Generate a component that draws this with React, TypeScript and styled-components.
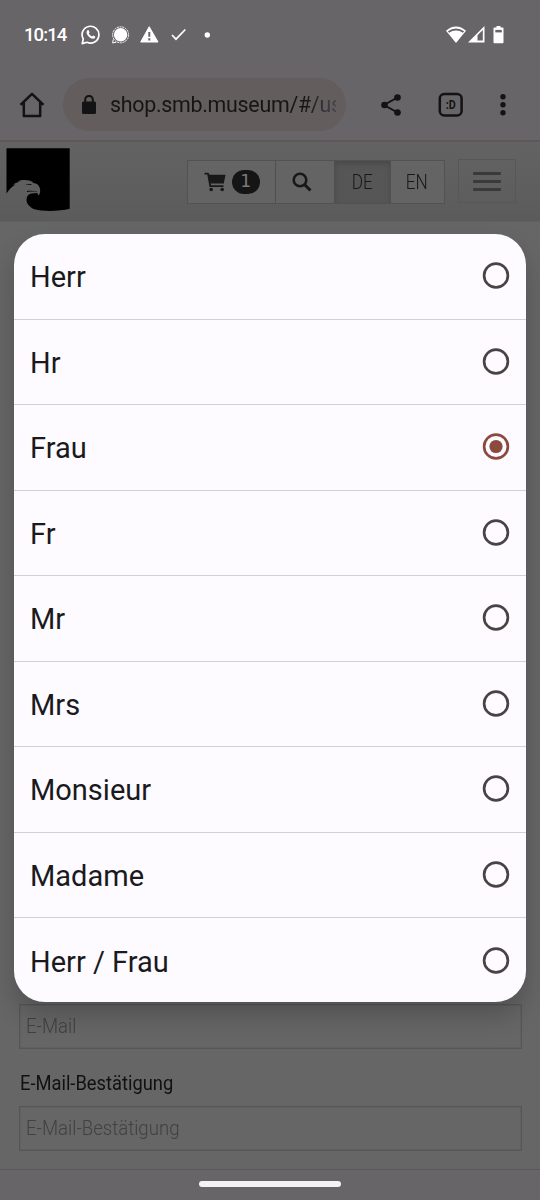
import React from "react";
import styled, { createGlobalStyle } from "styled-components";

const Global = createGlobalStyle`
  * { box-sizing: border-box; }
  body { margin: 0; background: #666; font-family: Roboto, sans-serif; }
`;

const Screen = styled.div`
  position: relative;
  display: flex;
  flex-direction: column;
  width: 540px;
  height: 1200px;
  overflow: hidden;
  background: #666666;
`;

const StatusBar = styled.header`
  display: flex;
  align-items: center;
  height: 69px;
  padding: 0 36px 0 24px;
  background: #676568;
  color: #fff;
`;

const Clock = styled.time`
  width: 57px;
  font-size: 18.6px;
  font-weight: 500;
  letter-spacing: -0.95px;
`;

const StatusIcons = styled.div<{ $gap: number; $end?: boolean }>`
  display: flex;
  align-items: center;
  gap: ${(p) => p.$gap}px;
  margin-left: ${(p) => (p.$end ? "auto" : "0")};
  svg { display: block; }
`;

const BrowserBar = styled.div`
  display: flex;
  align-items: center;
  height: 73px;
  padding: 0 20px 0 18px;
  background: #676568;
  border-bottom: 2px solid #5f5858;
  color: #131214;
  svg { display: block; flex: none; }
`;

const AddressField = styled.div`
  display: flex;
  align-items: center;
  width: 283px;
  height: 53px;
  margin: 0 33px 0 17px;
  padding-left: 18px;
  border-radius: 27px;
  background: #635d5d;
`;

const Address = styled.span`
  width: 226px;
  margin-left: 13px;
  overflow: hidden;
  white-space: nowrap;
  font-size: 21.4px;
  letter-spacing: -0.28px;
  line-height: 32px;
  background: linear-gradient(90deg, #171416 86%, #48444a 100%);
  background-clip: text;
  color: transparent;
`;

const BarActions = styled.div`
  display: flex;
  align-items: center;
  gap: 35px;
`;

const SiteHeader = styled.div`
  display: flex;
  align-items: flex-start;
  height: 80px;
  padding: 6px 24px 0 6px;
  background: linear-gradient(#636363, #5b5b5b);
  border-bottom: 1px solid #606060;
`;

const ToolGroup = styled.div`
  display: flex;
  width: 258px;
  height: 44px;
  margin: 12px 0 0 117px;
  border: 1px solid #525252;
`;

const Tool = styled.div<{ $width: number; $active?: boolean; $shift?: number }>`
  display: flex;
  align-items: center;
  justify-content: center;
  gap: 6px;
  width: ${(p) => p.$width}px;
  padding-right: ${(p) => p.$shift ?? 0}px;
  color: #181818;
  background: ${(p) => (p.$active ? "#565656" : "#646464")};
  box-shadow: ${(p) => (p.$active ? "inset 0 3px 5px #4a4a4a" : "none")};
  & + & { border-left: 1px solid #505050; }
`;

const Condensed = styled.span<{ $scale: number }>`
  display: inline-block;
  transform: scaleX(${(p) => p.$scale});
  transform-origin: left;
  white-space: nowrap;
`;

const Lang = styled(Condensed)`
  transform-origin: center;
  font-size: 20px;
  font-weight: 300;
`;

const Count = styled.span`
  display: flex;
  align-items: center;
  justify-content: center;
  width: 28px;
  height: 24px;
  border-radius: 12px;
  background: #151515;
  color: #7a7a7a;
  font: 18px/22px "DejaVu Sans Mono", monospace;
  padding-bottom: 2px;
`;

const MenuButton = styled.div`
  display: flex;
  flex-direction: column;
  align-items: center;
  justify-content: center;
  gap: 5px;
  width: 58px;
  height: 44px;
  margin: 11px 0 0 13px;
  border: 1px solid #575757;
`;

const MenuBar = styled.i`
  width: 28px;
  height: 3px;
  border-radius: 1px;
  background: #3a3a3a;
`;

const Form = styled.main`
  flex: 1;
  display: flex;
  flex-direction: column;
  justify-content: flex-end;
  padding: 0 18px 18px 19px;
`;

const Input = styled.div`
  height: 45px;
  padding-left: 6px;
  border: 1px solid #565656;
  box-shadow: inset 0 0 0 1px #606060;
  font-size: 19.5px;
  font-weight: 300;
  line-height: 44px;
  color: #414141;
`;

const Label = styled.label`
  height: 57px;
  padding: 23px 0 0 1px;
  font-size: 19.5px;
  line-height: 24px;
  color: #111;
`;

const NavBar = styled.footer`
  display: flex;
  justify-content: center;
  height: 31px;
  padding-top: 11px;
  background: #676568;
  border-top: 1px solid #595757;
`;

const NavHandle = styled.i`
  width: 142px;
  height: 6px;
  border-radius: 3px;
  background: #f4f2f5;
`;

const Dialog = styled.div`
  position: absolute;
  left: 14px;
  top: 234px;
  width: 512px;
  height: 768px;
  display: grid;
  grid-template-rows: repeat(9, 85.5px);
  overflow: hidden;
  border-radius: 31px;
  background: #fdfbff;
`;

const DialogShadow = styled.div`
  position: absolute;
  left: 14px;
  top: 234px;
  width: 512px;
  height: 768px;
  border-radius: 31px;
  box-shadow: 0 14px 26px rgba(0, 0, 0, 0.2);
`;

const Option = styled.div`
  display: flex;
  align-items: center;
  justify-content: space-between;
  padding: 0 16px;
  border-bottom: 1px solid #d2d0d4;
  font-size: 29px;
  color: #1a191c;
  &:last-child { border-bottom: 0; }
`;

const OptionText = styled.span`
  padding-top: 2px;
`;

const RadioMark = styled.svg<{ $on: boolean }>`
  display: block;
  width: 28px;
  height: 28px;
  color: ${(p) => (p.$on ? "#8c4a3e" : "#4a4343")};
`;

const Radio = ({ on }: { on: boolean }) => (
  <RadioMark $on={on} viewBox="0 0 28 28">
    <circle cx="14" cy="13.5" r="11.9" fill="none" stroke="currentColor" strokeWidth="2.7" />
    {on && <circle cx="14" cy="13.5" r="6.6" fill="currentColor" />}
  </RadioMark>
);

const options = ["Herr", "Hr", "Frau", "Fr", "Mr", "Mrs", "Monsieur", "Madame", "Herr / Frau"];

const WhatsApp = () => (
  <svg width="20" height="20" viewBox="0 0 20 20" fill="none" stroke="#fff" strokeWidth="1.7">
    <path d="M1.2 18.6 2.3 14A8.4 8.4 0 1 1 6 17.3Z" strokeLinejoin="round" />
    <path d="M6.3 5.5c.7-.6 1.2-.5 1.5.1l.7 1.7c.1.4-.6 1-.6 1.3.6 1.3 1.7 2.3 3.1 2.8.4 0 .9-1.1 1.3-.9l1.8.9c.8.6-.4 2.1-1.7 2.3-3 .2-7-3.6-6.8-6.5 0-.7.3-1.3.7-1.7Z" fill="#fff" stroke="none" />
  </svg>
);

const Signal = () => (
  <svg width="18" height="18" viewBox="0 0 18 18">
    <circle cx="8.6" cy="8.8" r="6.7" fill="#fff" />
    <circle cx="8.6" cy="8.8" r="8" fill="none" stroke="#fff" strokeWidth="1" strokeDasharray="2 .8" />
    <path d="M1.2 13.5.7 17l3.500-.8" fill="none" stroke="#fff" />
  </svg>
);

const Warning = () => (
  <svg width="19" height="17" viewBox="0 0 19 17">
    <path d="M9.200.7 18 16H.7Z" fill="#fff" stroke="#fff" strokeLinejoin="round" />
    <path d="M9.300 6v4.800M9.300 12.300v2.200" stroke="#676568" strokeWidth="2" />
  </svg>
);

const Eagle = () => (
  <svg width="64" height="64" viewBox="0 0 64 64">
    <path d="M.5.3H63.7V60.8C54 63.3 37 63.8 28.500 61.300 23 59 20 55 20.600 50.700 21.100 47.700 23 45.800 25.500 45.600 28 45.300 30 44.800 31.300 45.200L32.800 47.500C34.600 44.500 34.700 41 33 38.300 31.700 36 29.500 35.200 26.500 34.800L27 34C23.500 31.600 16.500 31.200 11.500 33.300L14 33.500C11 34.300 8.500 35.500 7 36.800L9.500 36.600C6 38.500 3 41.800.5 45.500Z" />
    <path d="M19.500 36C21.500 36.500 24 36.400 26 36.200L25 37C23 37.200 21 37 19.500 36ZM21 43.100C24 42.500 27.500 42.600 30.800 43.500L31.200 44.100C28 43.500 24.500 43.500 21 43.900Z" />
  </svg>
);

export default function App() {
  return (
    <>
      <Global />
      <Screen>
        <StatusBar>
          <Clock>10:14</Clock>
          <StatusIcons $gap={10.5}>
            <WhatsApp />
            <Signal />
            <Warning />
            <svg width="16" height="13" viewBox="0 0 16 13" fill="none" stroke="#fff" strokeWidth="1.7">
              <path d="m2 7 4 4.200L15.300 1.500" />
            </svg>
            <svg width="26" height="6" viewBox="0 0 26 6"><circle cx="11.300" cy="3" r="2.700" fill="#fff" /></svg>
          </StatusIcons>
          <StatusIcons $gap={1.5} $end>
            <svg width="20" height="17" viewBox="0 0 20 17">
              <path d="M0 4.800C6-.9 14-.9 20 4.800L10 17Z" fill="#fff" />
              <path d="M2.500 6C7 2.600 13 2.600 17.500 6" fill="none" stroke="#676568" strokeWidth="2" />
            </svg>
            <svg width="17" height="17" viewBox="0 0 17 17">
              <path d="M0 16.500 16.500 0V16.500Z" fill="#fff" />
              <path d="M9.500 9.300 14.800 4V14.500H9.500Z" fill="#676568" />
            </svg>
            <svg width="18" height="18" viewBox="0 0 18 18">
              <path d="M10.500 0h4v1.500h2q1 0 1 1v14q0 .8-1 .8h-8q-1 0-1-.8v-14q0-1 1-1h2Z" fill="#fff" />
              <path d="M9.300 3.900h6.500v2.500H9.300Z" fill="#676568" />
            </svg>
          </StatusIcons>
        </StatusBar>

        <BrowserBar>
          <svg width="28" height="28" viewBox="0 0 28 28" fill="none" stroke="currentColor" strokeWidth="2.5" strokeLinejoin="round">
            <path d="M2.500 13.800 14 2.800 25.500 13.800M5.800 11v14H22.200V11" />
          </svg>
          <AddressField>
            <svg width="16" height="20" viewBox="0 0 16 20">
              <rect x="1" y="6.5" width="14" height="12.5" rx="1.5" fill="currentColor" />
              <path d="M4.200 7V4.700a3.800 3.800 0 0 1 7.600 0V7" fill="none" stroke="currentColor" strokeWidth="2" />
            </svg>
            <Address>shop.smb.museum/#/us</Address>
          </AddressField>
          <BarActions>
            <svg width="24" height="24" viewBox="0 0 24 24" fill="currentColor">
              <path d="M18.500 4.500 5 12l13.500 7.500" fill="none" stroke="currentColor" strokeWidth="2" />
              <circle cx="18.500" cy="4.500" r="3.300" /><circle cx="5.500" cy="12" r="3.300" /><circle cx="18.500" cy="19.500" r="3.300" />
            </svg>
            <svg width="26" height="26" viewBox="0 0 26 26">
              <rect x="1.800" y="2" width="21.800" height="21.400" rx="4.500" fill="none" stroke="currentColor" strokeWidth="2.500" />
              <text x="12.800" y="17" textAnchor="middle" fontFamily="Roboto" fontSize="12.300" fontWeight="700" fill="currentColor" textLength="10" lengthAdjust="spacingAndGlyphs">:D</text>
            </svg>
            <svg width="8" height="24" viewBox="0 0 8 24" fill="currentColor">
              <circle cx="4" cy="3.800" r="2.700" /><circle cx="4" cy="11.800" r="2.700" /><circle cx="4" cy="19.800" r="2.700" />
            </svg>
          </BarActions>
        </BrowserBar>

        <SiteHeader>
          <Eagle />
          <ToolGroup>
            <Tool $width={87}>
              <svg width="22" height="20" viewBox="0 0 22 20" fill="currentColor">
                <path d="M.5.800H4.500L5.500 2.800H21.500L19.800 11.500H6.700L7 13.200H19.500V15H5.500L3.300 2.500H.500Z" />
                <circle cx="7.200" cy="17.500" r="1.800" /><circle cx="18.200" cy="17.500" r="1.800" />
              </svg>
              <Count>1</Count>
            </Tool>
            <Tool $width={59} $shift={6}>
              <svg width="20" height="20" viewBox="0 0 20 20" fill="none" stroke="currentColor">
                <circle cx="8" cy="8" r="6.300" strokeWidth="2.600" /><path d="m12.500 12.500 6 6" strokeWidth="3" />
              </svg>
            </Tool>
            <Tool $width={56} $active $shift={1}><Lang $scale={0.86}>DE</Lang></Tool>
            <Tool $width={54} $shift={1}><Lang $scale={0.86}>EN</Lang></Tool>
          </ToolGroup>
          <MenuButton><MenuBar /><MenuBar /><MenuBar /></MenuButton>
        </SiteHeader>

        <Form>
          <Input><Condensed $scale={0.955}>E-Mail</Condensed></Input>
          <Label><Condensed $scale={0.94}>E-Mail-Bestätigung</Condensed></Label>
          <Input><Condensed $scale={0.955}>E-Mail-Bestätigung</Condensed></Input>
        </Form>

        <NavBar><NavHandle /></NavBar>

        <DialogShadow />
        <Dialog role="radiogroup">
          {options.map((name) => (
            <Option key={name}>
              <OptionText>{name}</OptionText>
              <Radio on={name === "Frau"} />
            </Option>
          ))}
        </Dialog>
      </Screen>
    </>
  );
}
